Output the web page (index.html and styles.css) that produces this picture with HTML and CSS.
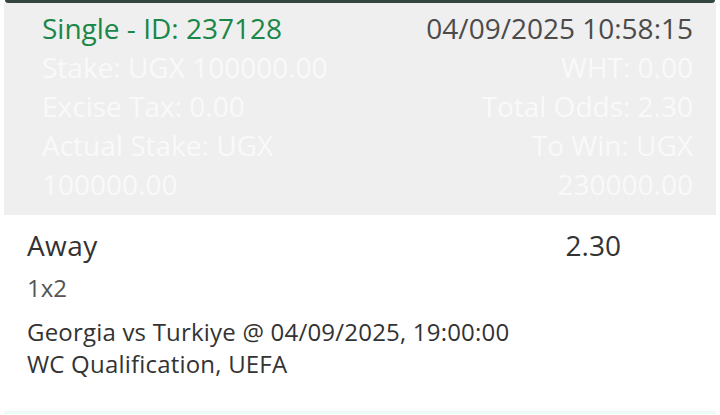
FILE: index.html
```html
<!DOCTYPE html>
<html lang="en">

<head>
    <meta charset="UTF-8">
    <meta name="viewport" content="width=device-width, initial-scale=1.0">
    <title>Bet details</title>
    <link rel="stylesheet" href="styles.css">
</head>

<body>
    <div class="ticket">
        <div class="topbar"></div>
        <div class="summary">
            <div class="row">
                <span class="bet-id">Single - ID: 237128</span>
                <span class="bet-date">04/09/2025 10:58:15</span>
            </div>
            <div class="row faint">
                <span>Stake: UGX 100000.00</span>
                <span>WHT: 0.00</span>
            </div>
            <div class="row faint">
                <span>Excise Tax: 0.00</span>
                <span>Total Odds: 2.30</span>
            </div>
            <div class="row faint">
                <span>Actual Stake: UGX<br>100000.00</span>
                <span>To Win: UGX<br>230000.00</span>
            </div>
        </div>

        <div class="selection">
            <div class="pick">
                <span class="pick-name">Away</span>
                <span class="pick-odds">2.30</span>
            </div>
            <div class="market">1x2</div>
            <div class="match">
                Georgia vs Turkiye @ 04/09/2025, 19:00:00<br>
                WC Qualification, UEFA
            </div>
        </div>
        <div class="footer-line"></div>
    </div>
</body>

</html>
```

FILE: styles.css
```css
body {
    margin: 0;
    padding: 0;
    background-color: #fff;
    font-family: "Open Sans", "Noto Sans", sans-serif;
}

.ticket {
    margin: 0 4px;
}

.topbar {
    height: 3px;
    margin: 0 1px;
    background-color: #33463f;
    border-radius: 0 0 6px 6px;
}

.summary {
    background-color: #efefef;
    padding: 6px 23px 8px 38px;
    height: 198px;
}

.row {
    display: flex;
    justify-content: space-between;
    font-size: 28px;
    line-height: 39px;
    font-weight: 500;
}

.row span:last-child {
    text-align: right;
}

.bet-id {
    color: #1a8749;
}

.bet-date {
    color: #4b4b4b;
}

.faint {
    color: #f9f9f9;
}

.selection {
    padding: 13px 95px 0 23px;
}

.pick {
    display: flex;
    justify-content: space-between;
    font-size: 28px;
    line-height: 34px;
    font-weight: 500;
    color: #333;
}

.pick-name {
    letter-spacing: 0.4px;
}

.market {
    margin-top: 11px;
    font-size: 24px;
    line-height: 30px;
    color: #555;
}

.match {
    margin-top: 13px;
    font-size: 24px;
    line-height: 32px;
    letter-spacing: 0.2px;
    color: #333;
}

.footer-line {
    margin-top: 31px;
    height: 3px;
    background-color: #eafcf5;
}
```
